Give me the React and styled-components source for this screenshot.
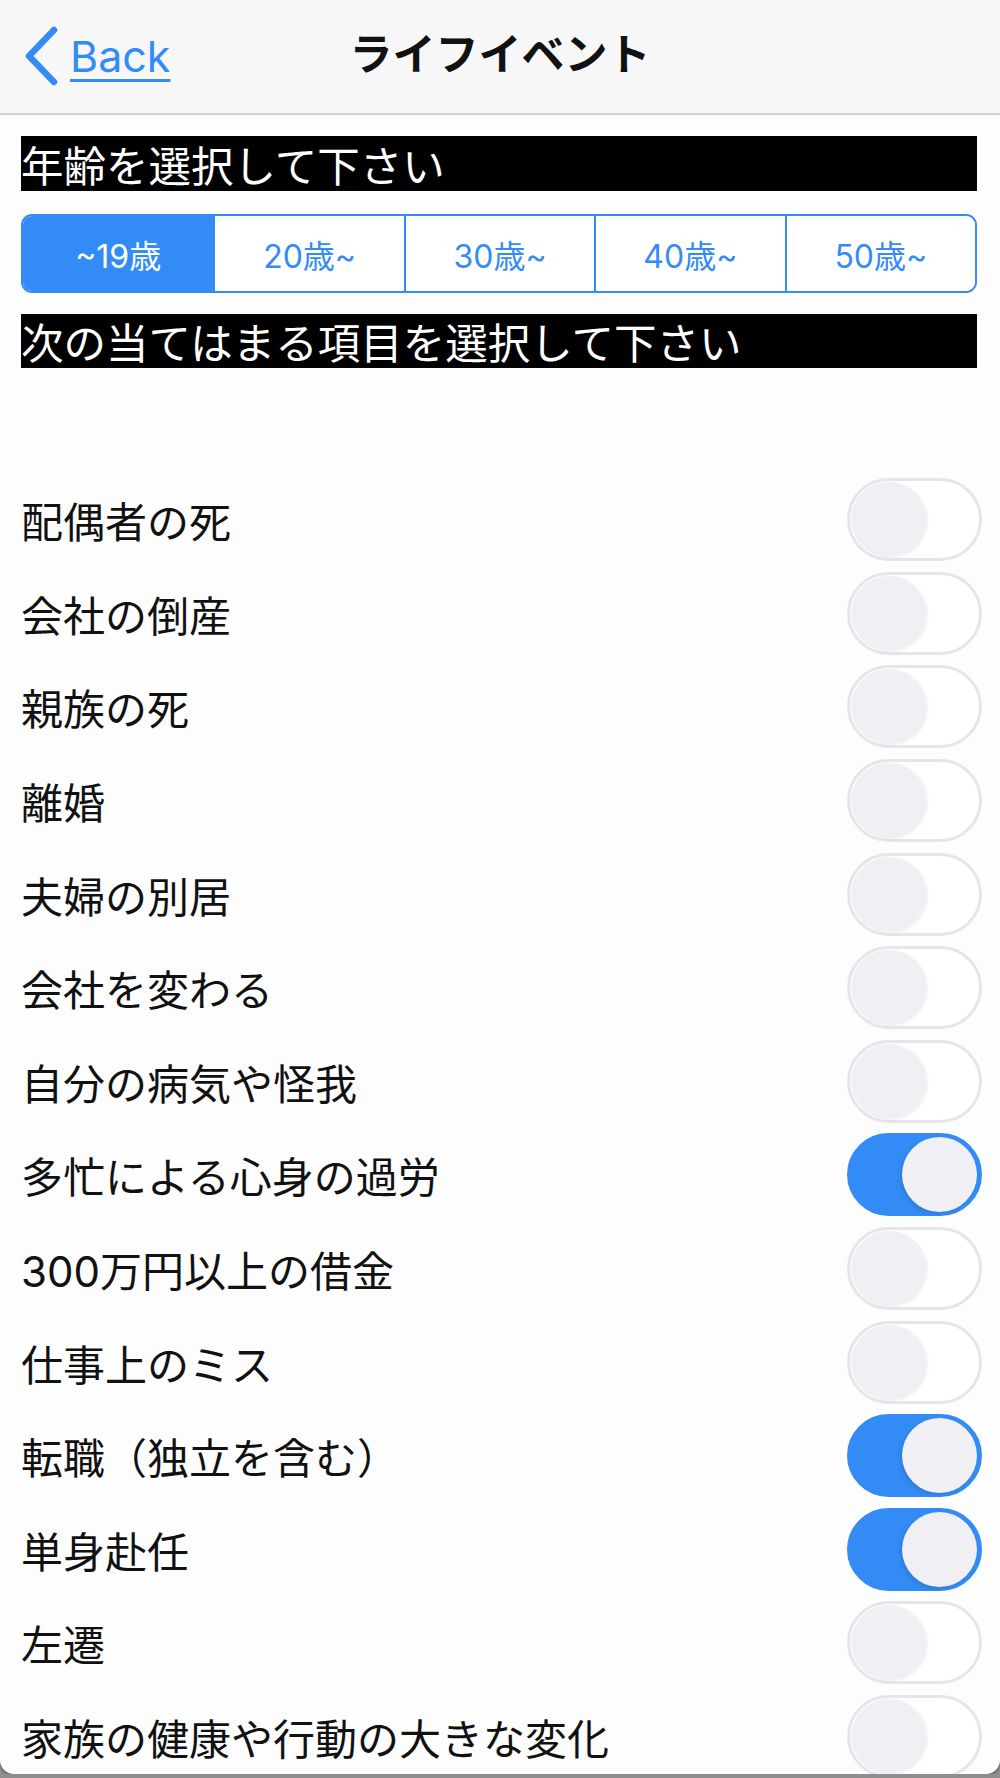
import React, { useState } from 'react';
import styled, { createGlobalStyle } from 'styled-components';

const GlobalStyle = createGlobalStyle`
  html, body {
    margin: 0;
    padding: 0;
    background: #8e8e90;
  }
  * {
    box-sizing: border-box;
  }
`;

const BLUE = '#338cf6';
const JP = `"Noto Sans CJK JP", "Noto Sans", sans-serif`;
const LATIN = `Inter, "Noto Sans CJK JP", sans-serif`;

const Screen = styled.div`
  width: 1000px;
  height: 1774px;
  overflow: hidden;
  background: #fdfdfe;
  border-radius: 0 0 14px 14px;
  box-shadow: 0 2px 3px rgba(0, 0, 0, 0.35);
`;

const NavBar = styled.header`
  height: 115px;
  display: grid;
  grid-template-columns: 1fr auto 1fr;
  align-items: center;
  padding: 0 24px 12px;
  background: #f7f7f8;
  border-bottom: 2px solid #d2d2d6;
`;

const BackLink = styled.a`
  display: flex;
  align-items: center;
  gap: 12px;
  margin-top: 10px;
  color: ${BLUE};
  font-family: ${LATIN};
  font-size: 43px;
  text-decoration: underline;
  text-decoration-thickness: 3px;
  text-underline-offset: 7px;
  justify-self: start;
`;

const Title = styled.h1`
  margin: 0;
  font-family: ${JP};
  font-size: 43px;
  font-weight: 700;
  color: #111;
`;

const Body = styled.main`
  padding: 21px 23px 0 21px;
`;

const SectionBar = styled.div`
  height: ${(p) => p.h}px;
  background: #000;
  color: #fff;
  font-family: ${JP};
  font-size: 42.5px;
  line-height: ${(p) => p.h}px;
  white-space: nowrap;
`;

const Segmented = styled.div`
  margin: 23px 0 21px;
  height: 79px;
  display: grid;
  grid-template-columns: repeat(5, 1fr);
  border: 2px solid ${BLUE};
  border-radius: 11px;
  overflow: hidden;
`;

const Segment = styled.button`
  border: none;
  border-left: ${(p) => (p.first ? 'none' : `2px solid ${BLUE}`)};
  background: ${(p) => (p.active ? BLUE : '#fff')};
  color: ${(p) => (p.active ? '#fff' : BLUE)};
  font-family: ${LATIN};
  font-size: 32px;
  padding: 0;
  cursor: pointer;
`;

const List = styled.ul`
  list-style: none;
  margin: 105px -23px 0 0;
  padding: 0;
`;

const Row = styled.li`
  height: 93.6px;
  display: flex;
  align-items: center;
  justify-content: space-between;
  padding-right: 18px;
`;

const Label = styled.span`
  font-family: ${LATIN};
  font-size: 42px;
  color: #111;
  white-space: nowrap;
`;

const Track = styled.button`
  position: relative;
  flex-shrink: 0;
  width: 135px;
  height: 83px;
  padding: 0;
  border-radius: 42px;
  border: 3px solid ${(p) => (p.on ? BLUE : '#e6e6ea')};
  background: ${(p) => (p.on ? BLUE : '#fff')};
  cursor: pointer;
`;

const Knob = styled.span`
  position: absolute;
  top: 1px;
  left: ${(p) => (p.on ? '52px' : '1px')};
  width: 75px;
  height: 75px;
  border-radius: 50%;
  background: #efeff4;
  box-shadow: ${(p) =>
    p.on ? '-2px 2px 4px rgba(0, 0, 0, 0.12)' : '2px 1px 3px rgba(0, 0, 0, 0.06)'};
`;

const ages = ['~19歳', '20歳~', '30歳~', '40歳~', '50歳~'];

const events = [
  ['配偶者の死', false],
  ['会社の倒産', false],
  ['親族の死', false],
  ['離婚', false],
  ['夫婦の別居', false],
  ['会社を変わる', false],
  ['自分の病気や怪我', false],
  ['多忙による心身の過労', true],
  ['300万円以上の借金', false],
  ['仕事上のミス', false],
  ['転職（独立を含む）', true],
  ['単身赴任', true],
  ['左遷', false],
  ['家族の健康や行動の大きな変化', false],
];

function Chevron() {
  return (
    <svg width="34" height="60" viewBox="0 0 34 60">
      <polyline
        points="30,4 5,30 30,56"
        fill="none"
        stroke={BLUE}
        strokeWidth="6.5"
        strokeLinecap="round"
        strokeLinejoin="round"
      />
    </svg>
  );
}

function Toggle({ on, onClick }) {
  return (
    <Track on={on} onClick={onClick}>
      <Knob on={on} />
    </Track>
  );
}

export default function App() {
  const [age, setAge] = useState(0);
  const [checked, setChecked] = useState(events.map((e) => e[1]));

  const flip = (i) =>
    setChecked((prev) => prev.map((v, j) => (j === i ? !v : v)));

  return (
    <>
      <GlobalStyle />
      <Screen>
        <NavBar>
          <BackLink>
            <Chevron />
            Back
          </BackLink>
          <Title>ライフイベント</Title>
          <span />
        </NavBar>
        <Body>
          <SectionBar h={55}>年齢を選択して下さい</SectionBar>
          <Segmented>
            {ages.map((a, i) => (
              <Segment key={a} first={i === 0} active={i === age} onClick={() => setAge(i)}>
                {a}
              </Segment>
            ))}
          </Segmented>
          <SectionBar h={54}>次の当てはまる項目を選択して下さい</SectionBar>
          <List>
            {events.map(([label], i) => (
              <Row key={label}>
                <Label>{label}</Label>
                <Toggle on={checked[i]} onClick={() => flip(i)} />
              </Row>
            ))}
          </List>
        </Body>
      </Screen>
    </>
  );
}
